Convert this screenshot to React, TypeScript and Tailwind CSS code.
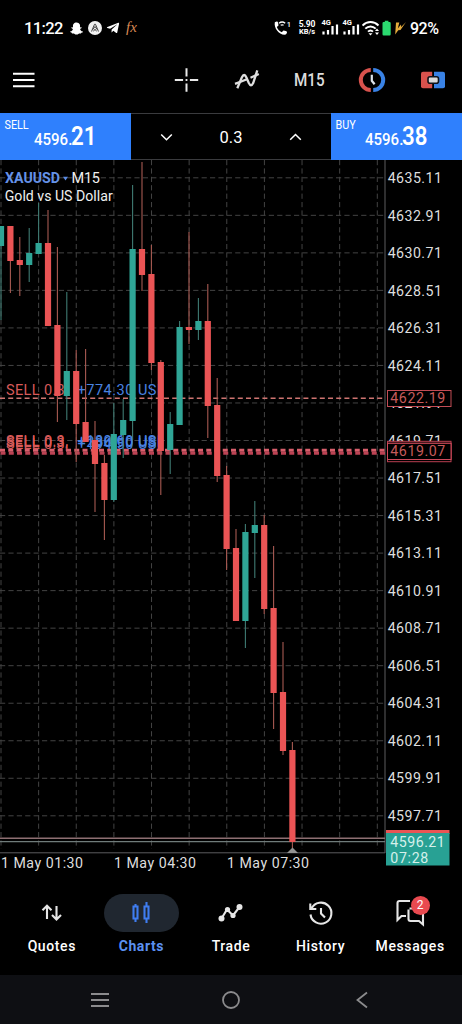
import React from "react";
import { FaSnapchatGhost, FaTelegramPlane } from "react-icons/fa";

const RED = "#ea5455";
const GREEN = "#2fa596";

type Candle = [up: 0 | 1, high: number, top: number, bottom: number, low: number];

const candles: Candle[] = [
  [1, 226, 226, 246, 320],
  [0, 226, 226, 261, 293],
  [0, 237, 260, 265, 296],
  [1, 228, 253, 265, 282],
  [1, 203, 243, 254, 254],
  [0, 210, 243, 326, 326],
  [0, 247, 325, 396, 422],
  [1, 292, 371, 396, 420],
  [0, 350, 371, 424, 462],
  [0, 349, 422, 442, 442],
  [0, 421, 440, 464, 512],
  [0, 455, 463, 500, 540],
  [1, 403, 434, 500, 502],
  [1, 399, 420, 435, 458],
  [1, 185, 249, 421, 440],
  [0, 162, 249, 275, 291],
  [0, 245, 274, 363, 370],
  [0, 360, 362, 451, 495],
  [1, 412, 424, 450, 474],
  [1, 321, 327, 425, 425],
  [0, 232, 327, 330, 344],
  [1, 298, 321, 330, 340],
  [0, 284, 321, 406, 438],
  [0, 378, 405, 476, 482],
  [0, 466, 475, 549, 570],
  [0, 529, 548, 621, 621],
  [1, 524, 532, 621, 648],
  [1, 501, 525, 533, 578],
  [0, 515, 525, 609, 614],
  [0, 546, 608, 693, 729],
  [0, 642, 692, 751, 755],
  [0, 742, 750, 842, 848],
];

const priceLabels = Array.from({ length: 18 }, (_, i) => ({
  text: (4635.11 - i * 2.2).toFixed(2),
  y: 177.8 + i * 37.53,
}));

const gridColumns = Array.from({ length: 11 }, (_, i) => 1 + i * 37.63);

const timeLabels = [
  { x: 1, text: "1 May 01:30" },
  { x: 114, text: "1 May 04:30" },
  { x: 227, text: "1 May 07:30" },
];

function OrderLabel({ y, profit }: { y: number; profit: string }) {
  return (
    <g fontSize="14.5" clipPath="url(#order-labels)">
      <text x="6" y={y} fill="#d85a59" textLength="62">SELL 0.3,</text>
      <text x="77.5" y={y} fill="#4a83e0" textLength="89">{profit}</text>
    </g>
  );
}

function Chart() {
  return (
    <svg className="block h-[716px] w-[462px] font-[Roboto,sans-serif]" viewBox="0 160 462 716">
      <defs>
        <clipPath id="order-labels">
          <rect x="0" y="370" width="160" height="90" />
        </clipPath>
      </defs>
      <g stroke="#434343" strokeWidth="1" strokeDasharray="5.2 3.2">
        {gridColumns.map((x) => (
          <line key={x} x1={x} x2={x} y1="160" y2="849" />
        ))}
        {priceLabels.map((p) => (
          <line key={p.text} x1="0" x2="385" y1={p.y} y2={p.y} />
        ))}
      </g>
      <g stroke="#5c5c5e" strokeWidth="1">
        <line x1="385" x2="385" y1="160" y2="853" />
        <line x1="0" x2="385" y1="852.8" y2="852.8" />
      </g>
      <line x1="0" x2="385" y1="838.3" y2="838.3" stroke="#8e6f72" strokeWidth="1.4" />
      <line x1="0" x2="385" y1="841.6" y2="841.6" stroke="#6f7b7a" strokeWidth="1.2" />

      <line x1="0" x2="385" y1="398.3" y2="398.3" stroke="#cf7471" strokeWidth="1.5" strokeDasharray="5 3.2" />
      <line x1="0" x2="385" y1="450.3" y2="450.3" stroke="#d95f6c" strokeWidth="3" strokeDasharray="5 3.25" />
      <line x1="0.5" x2="385" y1="453.2" y2="453.2" stroke="#bd4354" strokeWidth="3" strokeDasharray="5 3.25" />

      <OrderLabel y={394.5} profit="+774.30 USD" />
      <OrderLabel y={446} profit="+180.60 USD" />
      <OrderLabel y={447.2} profit="+236.90 USD" />
      <OrderLabel y={448.6} profit="+194.50 USD" />

      {candles.map(([up, high, top, bottom, low], i) => {
        const x = 1 + i * 9.4;
        return (
          <g key={i}>
            <line x1={x} x2={x} y1={high} y2={low} stroke={up ? "#3f7b73" : "#a85a52"} strokeWidth="1.1" />
            <rect x={x - 3.1} y={top} width="6.2" height={bottom - top} fill={up ? GREEN : RED} />
          </g>
        );
      })}
      <path d="M292.5 847.5 298 853H287Z" fill="#929292" />

      <g fill="#dedede" fontSize="14.2">
        {priceLabels.map((p) => (
          <text key={p.text} x="387.7" y={p.y + 5.2} textLength="54.2">{p.text}</text>
        ))}
        {timeLabels.map((t) => (
          <text key={t.x} x={t.x} y="868" textLength="82">{t.text}</text>
        ))}
      </g>

      <g fontSize="14.2">
        <rect x="387.5" y="390.5" width="63.5" height="16" fill="#000" stroke="#c24c55" />
        <text x="390.3" y="403.4" fill="#c65b5b" textLength="55">4622.19</text>
        <rect x="387.5" y="441.3" width="63.5" height="18" fill="#000" stroke="#b93f50" />
        <rect x="387.5" y="443.3" width="63.5" height="18.4" fill="#000" stroke="#b93f50" />
        <rect x="387.5" y="443.3" width="63.5" height="16.2" fill="#000" stroke="#cf4a5b" />
        <text x="390.3" y="456.4" fill="#c65b5b" textLength="55">4619.07</text>
        <rect x="386" y="830" width="63.5" height="4" fill={RED} />
        <rect x="386" y="833" width="63.5" height="32.5" fill="#28a194" />
        <text x="390.3" y="846.6" fill="#d5f0eb" textLength="54.5">4596.21</text>
        <text x="390.3" y="862.6" fill="#d5f0eb" textLength="38">07:28</text>
      </g>

      <g>
        <text x="5" y="183" fill="#6592e8" fontSize="14.5" fontWeight="700" textLength="55" lengthAdjust="spacingAndGlyphs">XAUUSD</text>
        <path d="M63 176.7H68L65.5 180.5Z" fill="#5b8ce6" />
        <text x="71.5" y="183" fill="#f0f0f0" fontSize="14.5" textLength="28.5">M15</text>
        <text x="4.7" y="201" fill="#f0f0f0" fontSize="14.5" textLength="108" lengthAdjust="spacingAndGlyphs">Gold vs US Dollar</text>
      </g>
    </svg>
  );
}

function Signal() {
  return (
    <svg className="h-5 w-[18px]" viewBox="0 0 18 20">
      <text x="0.5" y="7.2" fill="#fff" fontSize="7.5" fontWeight="700">4G</text>
      <path d="M2.5 16.5v-3M7 16.5v-4.5M11.5 16.5V8M16 16.5V6.5" stroke="#fff" strokeWidth="2.2" />
    </svg>
  );
}

function StatusBar() {
  return (
    <div className="flex h-14 items-center pl-6 text-white">
      <span className="w-[46px] pt-[2px] text-[16.5px] font-medium tracking-[-0.6px]">11:22</span>
      <FaSnapchatGhost className="h-[13px] w-[13px]" />
      <svg className="ml-[5px] h-[14px] w-[14px]" viewBox="0 0 14 14">
        <circle cx="7" cy="7" r="7" fill="#f2f2f2" />
        <path d="M3.5 10.5 6.5 3.3h1l3 7.2M4.8 8.6 7 5.5l2.2 3.1M5.4 10.4 7 8.2l1.6 2.2" fill="none" stroke="#333" strokeWidth="0.9" />
      </svg>
      <FaTelegramPlane className="ml-[4px] h-[14px] w-[14px]" />
      <span className="ml-[6px] -mt-0.5 w-[147px] font-['Liberation_Serif',serif] text-[15px] italic text-[#d98955]">fx</span>
      <svg className="h-5 w-[19px]" viewBox="273 18 19 20">
        <path d="M274.8 22.2c2.3-1.1 3.1-.7 3.4 1.1l.3 2.1-1.7 1.7c1 2.5 2.6 4.2 4.9 5.2l1.8-1.7 2.3.5c1.7.5 1.6 1.8.1 3.5-6.5 1.2-12.2-6.4-11.1-12.4Z" fill="#fff" />
        <path d="M279 23.2c2-1.6 4.2-1.6 6.2 0M280.700 25.300c1-.7 1.9-.7 2.9 0" fill="none" stroke="#fff" strokeWidth="1.3" />
        <text x="286.7" y="27" fill="#fff" fontSize="7.5" fontWeight="500">1</text>
      </svg>
      <div className="ml-[6px] w-[18px] text-center text-[8.5px] font-bold leading-[8.5px] tracking-[-0.1px]">
        <div>5.90</div>
        <div className="text-[7.5px]">KB/s</div>
      </div>
      <div className="ml-[5px]"><Signal /></div>
      <div className="ml-[3px]"><Signal /></div>
      <svg className="ml-[2px] h-5 w-[18px]" viewBox="364 18 18 20">
        <path d="M364.5 25.500c4.500-4.600 11.500-4.600 16 0M367.300 28.700c3-3 7.400-3 10.400 0M370 31.700c1.500-1.500 3.500-1.500 5 0" fill="none" stroke="#fff" strokeWidth="1.9" />
        <path d="M372.5 35.500l-2-2.300h4zM379 28.500l2 2.600h-4zM379 35l2-2.600h-4z" fill="#fff" />
      </svg>
      <svg className="ml-[2px] h-5 w-[26px]" viewBox="384 18 26 20">
        <path d="M386.800 20.800h3.600v1.200h1.200q1.100 0 1.100 1.200v11q0 1.300-1.100 1.300h-6q-1.100 0-1.100-1.300v-11q0-1.200 1.100-1.200h1.200z" fill="#2bd96f" />
        <path d="M398 22.500l3.300 0-1.500 6 3.200-4 .2 2.500 4.800-5-5.500 8-2.300.3-3 4.200z" fill="#e6ac3c" />
      </svg>
      <span className="ml-[2px] pt-[2px] text-[16px] font-medium tracking-[-0.5px]">92%</span>
    </div>
  );
}

function Toolbar() {
  return (
    <div className="flex h-[57px] items-start pl-[13px] pt-[10px]">
      <svg className="h-7 w-[22px]" viewBox="13 66 22 28">
        <path d="M13 73.700h21.500M13 80h21.500M13 86.300h21.500" stroke="#fff" strokeWidth="2" />
      </svg>
      <svg className="ml-[138px] h-7 w-7" viewBox="173 66 28 28">
        <path d="M186.500 68.300v8.300M186.500 83.400v8.300M174.800 80h8.300M189.900 80h8.300M185.600 80h1.800" stroke="#e8e8e8" strokeWidth="2" />
      </svg>
      <svg className="ml-[32px] h-7 w-7" viewBox="233 66 28 28">
        <path d="M237.300 88.300 241.800 77.500Q244.200 72.500 246.400 77.500L248.800 83Q251 87.500 253.200 83L257.300 70.300" fill="none" stroke="#dedede" strokeWidth="2.300" />
        <path d="M235 83.900 247 79.300M250.500 77.800 258.800 74" fill="none" stroke="#dedede" strokeWidth="2.200" />
      </svg>
      <span className="ml-[33px] mt-[2px] inline-block w-[64px] origin-left scale-x-[0.87] text-[17.5px] font-medium leading-6 text-[#dcdcdc]">M15</span>
      <svg className="h-7 w-7" viewBox="356 66 28 28">
        <path d="M368.800 70A10 10 0 0 0 368.800 90" fill="none" stroke="#d8524d" strokeWidth="4" />
        <path d="M371.200 70A10 10 0 0 1 371.200 90" fill="none" stroke="#3982e5" strokeWidth="4" />
        <path d="M369.800 74.800v6l2.800 3.500" fill="none" stroke="#dce3ec" strokeWidth="2.200" />
      </svg>
      <svg className="ml-[33px] h-7 w-7" viewBox="417 66 28 28">
        <path d="M421 71.700h9.200v16.600H421q-2 0-2-2V73.700q0-2 2-2z" fill="#d8524d" />
        <path d="M432 71.700h9q2 0 2 2v12.600q0 2-2 2h-9z" fill="#3982e5" />
        <rect x="426" y="76.700" width="10.500" height="6.600" rx="2" fill="#dadada" stroke="#10141c" strokeWidth="1.600" />
      </svg>
    </div>
  );
}

function Quote({ side, whole, pips }: { side: string; whole: string; pips: string }) {
  return (
    <div className="flex h-[47px] w-[131px] shrink-0 flex-col bg-[#2f80fd] text-white">
      <span className="h-[11px] origin-left scale-x-[0.9] pl-[5px] pt-[6px] text-[12px] leading-[12px]">{side}</span>
      <div className="flex h-[22px] items-baseline pl-[34px] leading-[26px]">
        <span className="w-[37px] origin-left scale-x-[0.91] text-[16.5px] font-medium">{whole}</span>
        <span className="w-[28px] origin-left scale-x-[0.89] text-[25px] font-semibold">{pips}</span>
      </div>
    </div>
  );
}

function QuoteBar() {
  return (
    <div className="flex h-[47px]">
      <Quote side="SELL" whole="4596." pips="21" />
      <div className="flex flex-1 items-center justify-between border-y border-[#3a3b3e] px-[29px] text-white">
        <svg className="h-3 w-[13px]" viewBox="0 0 13 12"><path d="M1.200 3.500 6.500 8.800 11.800 3.500" fill="none" stroke="#fff" strokeWidth="1.500" /></svg>
        <span className="pt-[3px] text-[16.5px]">0.3</span>
        <svg className="h-3 w-[13px]" viewBox="0 0 13 12"><path d="M1.200 8.800 6.500 3.500 11.800 8.800" fill="none" stroke="#fff" strokeWidth="1.500" /></svg>
      </div>
      <Quote side="BUY" whole="4596." pips="38" />
    </div>
  );
}

const tabs = [
  {
    label: "Quotes",
    icon: <path d="M11 22V9M6.500 13.200 11 8.700l4.500 4.500M20.500 9v13M16 18l4.500 4.500L25 18" />,
  },
  {
    label: "Charts",
    icon: <path d="M8.500 9.500h4v12h-4zM10.500 7v2.500M10.500 21.500V25M19.500 9.500h4v12h-4zM21.500 5v4.500M21.500 21.500V26" />,
  },
  {
    label: "Trade",
    icon: (
      <>
        <path d="M6.500 21.500 12 12.500 18 18.500 24.500 10" />
        <g fill="currentColor" stroke="none"><circle cx="6.500" cy="21.500" r="3" /><circle cx="12.500" cy="12.500" r="2.600" /><circle cx="18" cy="18.500" r="2.600" /><circle cx="24.500" cy="10" r="3" /></g>
      </>
    ),
  },
  {
    label: "History",
    icon: <path d="M6.500 11.500A10.500 10.500 0 1 1 5.500 17.500M5.300 6.500v5.500h6M16 11v5.500l4 4" />,
  },
  {
    label: "Messages",
    icon: <path d="M16 4H5.500Q3.500 4 3.500 6V23L7.500 19H12M15.500 11.500H27Q29 11.500 29 13.500V27.500L25 24H16.500Q14.500 24 14.500 22V12.500" />,
  },
];

function TabBar() {
  return (
    <nav className="flex h-[99px] px-[7px] pt-[18px]">
      {tabs.map((tab) => {
        const active = tab.label === "Charts";
        return (
          <div key={tab.label} className={active ? "flex flex-1 flex-col items-center text-[#5b90f2]" : "flex flex-1 flex-col items-center text-[#e6e6e6]"}>
            <div className={active ? "relative flex h-[38px] w-[75px] items-center justify-center rounded-full bg-[#202730]" : "relative flex h-[38px] w-[75px] items-center justify-center"}>
              <svg className="h-8 w-8" viewBox="0 0 32 32" fill="none" stroke={active ? "#3f7df0" : "currentColor"} strokeWidth="2.100">
                {tab.icon}
              </svg>
              {tab.label === "Messages" && (
                <span className="absolute left-[38px] top-[2px] h-[19px] w-[19px] rounded-full bg-[#e94a50] text-center text-[12px] leading-[19px] text-white">2</span>
              )}
            </div>
            <span className={active ? "mt-[4px] text-[14px] font-bold leading-5 tracking-[0.6px]" : "mt-[4px] text-[14px] font-medium leading-5 tracking-[0.6px] text-white"}>{tab.label}</span>
          </div>
        );
      })}
    </nav>
  );
}

function SystemNav() {
  return (
    <div className="flex h-[49px] items-center justify-between bg-[#0e0f13] pl-[91px] pr-[91px]">
      <svg className="h-5 w-[18px]" viewBox="0 0 18 20"><path d="M0 4h18M0 10h18M0 16h18" stroke="#8b8b8d" strokeWidth="1.800" /></svg>
      <svg className="h-5 w-5" viewBox="0 0 20 20"><circle cx="10" cy="10" r="8" fill="none" stroke="#8b8b8d" strokeWidth="1.800" /></svg>
      <svg className="h-5 w-[18px]" viewBox="0 0 18 20"><path d="M14 2.500 4.500 10 14 17.500" fill="none" stroke="#8b8b8d" strokeWidth="1.800" /></svg>
    </div>
  );
}

export default function App() {
  return (
    <div className="flex h-[1024px] w-[462px] flex-col overflow-hidden bg-black font-[Roboto,sans-serif]">
      <StatusBar />
      <Toolbar />
      <QuoteBar />
      <Chart />
      <TabBar />
      <SystemNav />
    </div>
  );
}
